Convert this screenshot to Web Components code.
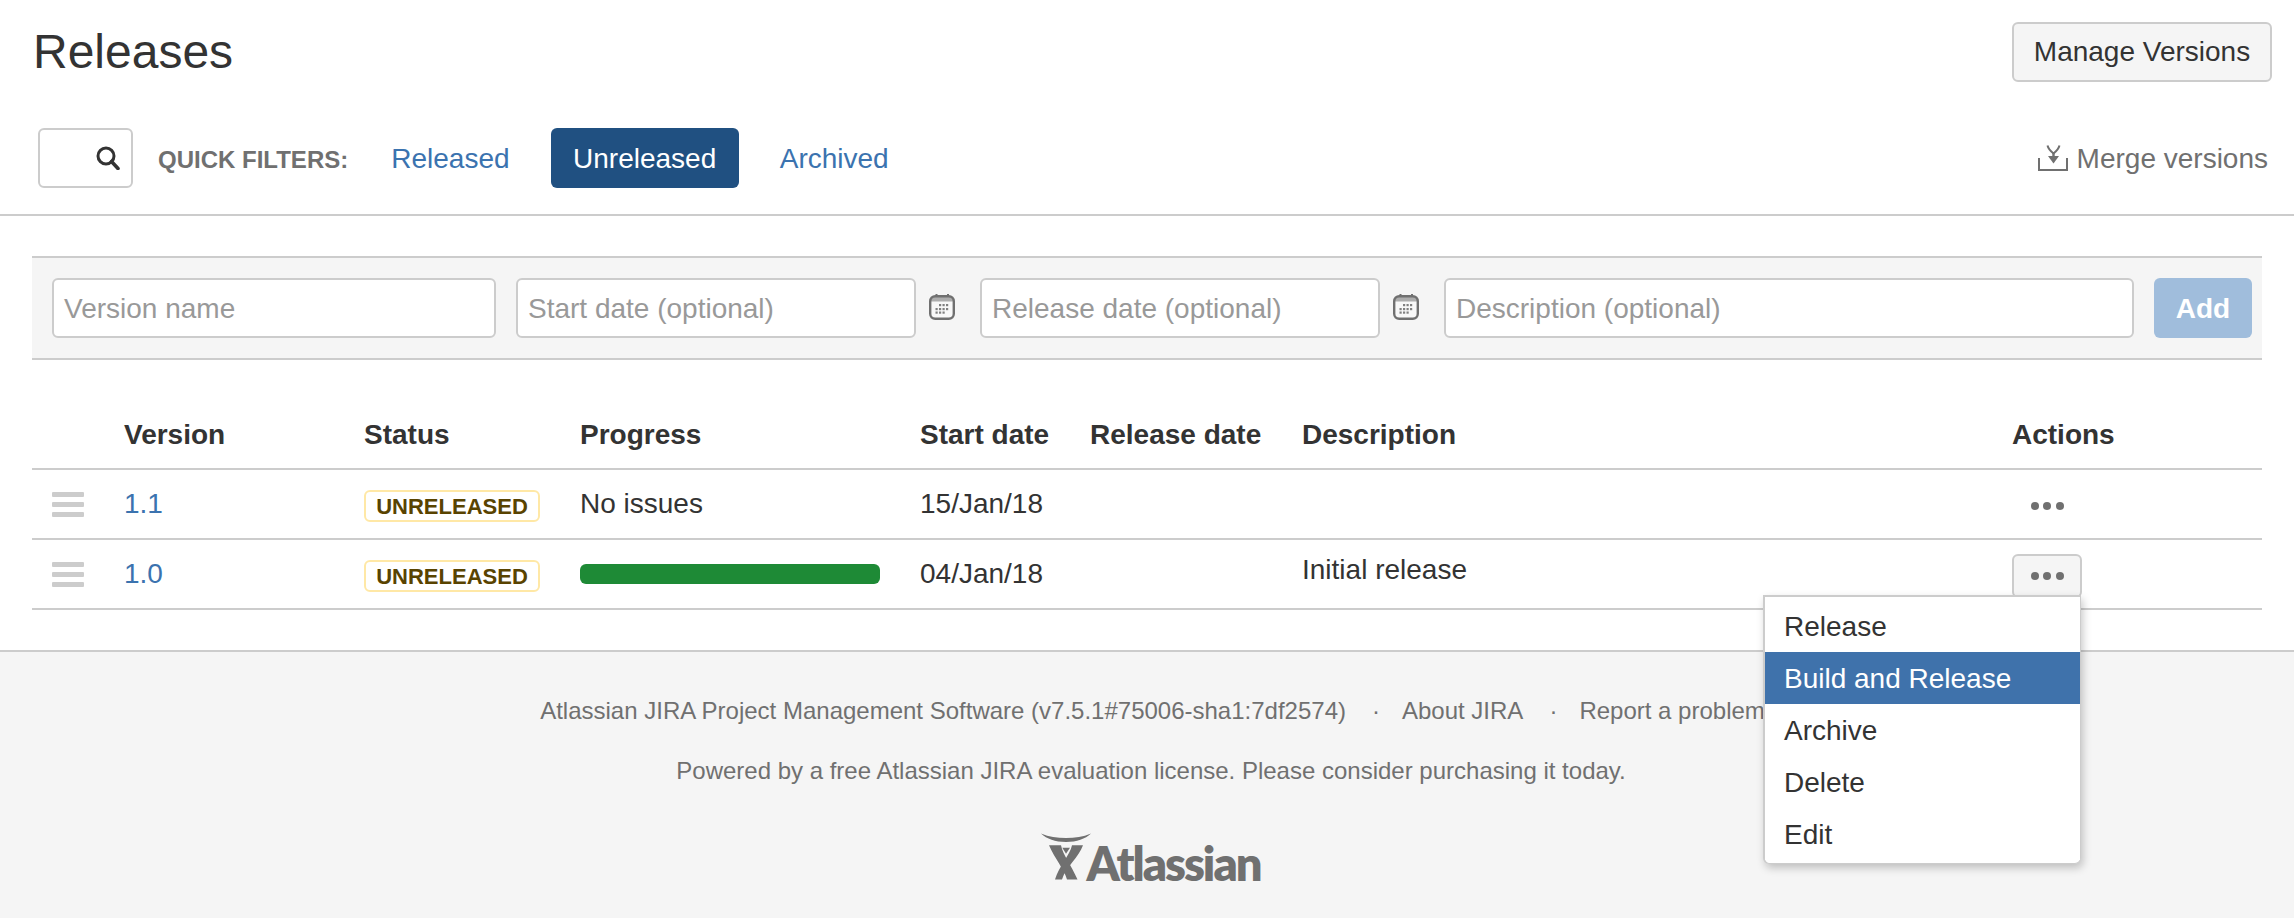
<!DOCTYPE html>
<html lang="en">
<head>
<meta charset="utf-8">
<title>Releases</title>
<style>
html,body{margin:0;padding:0;height:100%;background:#fff}
body{font:28px/40px "Liberation Sans",Arial,sans-serif;color:#333;overflow:hidden}
</style>
</head>
<body>
<release-page>
  <page-header>
    <span slot="title">Releases</span>
    <plain-button slot="action">Manage Versions</plain-button>
  </page-header>
  <filter-bar>
    <search-box slot="start"></search-box>
    <filter-label slot="start">QUICK FILTERS:</filter-label>
    <filter-pill slot="start">Released</filter-pill>
    <filter-pill slot="start" active>Unreleased</filter-pill>
    <filter-pill slot="start">Archived</filter-pill>
    <merge-link slot="end">Merge versions</merge-link>
  </filter-bar>
  <version-form>
    <form-field style="width:444px">Version name</form-field>
    <form-field style="width:400px" date>Start date (optional)</form-field>
    <form-field style="width:400px" date>Release date (optional)</form-field>
    <form-field style="width:690px">Description (optional)</form-field>
    <add-button>Add</add-button>
  </version-form>
  <version-table>
    <version-head>
      <span></span><span>Version</span><span>Status</span><span>Progress</span><span>Start date</span><span>Release date</span><span>Description</span><span>Actions</span>
    </version-head>
    <version-row>
      <drag-handle></drag-handle>
      <version-link>1.1</version-link>
      <status-lozenge>UNRELEASED</status-lozenge>
      <row-text>No issues</row-text>
      <row-text>15/Jan/18</row-text>
      <span></span>
      <span></span>
      <row-actions></row-actions>
    </version-row>
    <version-row>
      <drag-handle></drag-handle>
      <version-link>1.0</version-link>
      <status-lozenge>UNRELEASED</status-lozenge>
      <progress-bar></progress-bar>
      <row-text>04/Jan/18</row-text>
      <span></span>
      <row-text top>Initial release</row-text>
      <row-actions open>
        <action-menu>
          <menu-entry>Release</menu-entry>
          <menu-entry active>Build and Release</menu-entry>
          <menu-entry>Archive</menu-entry>
          <menu-entry>Delete</menu-entry>
          <menu-entry>Edit</menu-entry>
        </action-menu>
      </row-actions>
    </version-row>
  </version-table>
  <page-footer>
    <footer-links>
      <span>Atlassian JIRA Project Management Software (v7.5.1#75006-sha1:7df2574)</span>
      <i>·</i>
      <span>About JIRA</span>
      <i>·</i>
      <span>Report a problem</span>
    </footer-links>
    <footer-note>Powered by a free Atlassian JIRA evaluation license. Please consider purchasing it today.</footer-note>
    <atlassian-logo></atlassian-logo>
  </page-footer>
</release-page>
<script>
function el(name, html){
  customElements.define(name, class extends HTMLElement{
    constructor(){
      super();
      const r=this.attachShadow({mode:'open'});
      r.innerHTML=html;
    }
  });
}
const GRID='display:grid;grid-template-columns:92px 240px 216px 340px 170px 212px 710px 250px;';
const dots=[[10,10],[13.5,10],[17,10],[6.5,14],[10,14],[13.5,14],[17,14],[6.5,17.5],[10,17.5],[13.5,17.5]].map(([x,y])=>`<rect x="${x}" y="${y}" width="2.2" height="2.2"/>`).join('');
const CAL=`<svg style="display:block" width="26" height="26" viewBox="0 0 26 26" aria-hidden="true"><path d="M6.500 0h2v4h-2zM18 0h2v4h-2z" fill="#707070"/><rect x="1.200" y="2.200" width="23.600" height="22.600" rx="5" fill="#f8f8f8" stroke="#707070" stroke-width="2.400"/><path d="M2 6a3 3 0 0 1 3-3h16a3 3 0 0 1 3 3v1.500H2z" fill="#707070" opacity=".55"/><g fill="#808080">${dots}</g></svg>`;

el('release-page','<style>:host{display:flex;flex-direction:column;height:918px}</style><slot></slot>');
el('page-header',`<style>:host{display:flex;justify-content:space-between;align-items:center;padding:22px 22px 0 33px;height:60px}
::slotted([slot=title]){font-size:48px;line-height:60px;color:#333}</style><slot name="title"></slot><slot name="action"></slot>`);
el('plain-button',`<style>:host{display:block;box-sizing:border-box;width:260px;height:60px;background:#f5f5f5;border:2px solid #ccc;border-radius:6px;text-align:center;line-height:56px;color:#333}</style><slot></slot>`);
el('filter-bar',`<style>:host{display:flex;justify-content:space-between;align-items:center;height:60px;margin-top:46px;padding:0 26px 26px 38px;border-bottom:2px solid #ccc}
.s{display:flex;align-items:center;gap:18px}</style><div class="s"><slot name="start"></slot></div><slot name="end"></slot>`);
el('search-box',`<style>:host{display:flex;box-sizing:border-box;width:95px;height:60px;border:2px solid #ccc;border-radius:6px;margin-right:7px;justify-content:flex-end;align-items:center;padding-right:11px;background:#fff}</style>
<svg width="24" height="24" viewBox="0 0 24 24" aria-hidden="true"><circle cx="10" cy="10" r="8" fill="none" stroke="#333" stroke-width="3"/><path d="M15.500 15.500 22 22.500" stroke="#333" stroke-width="3.600" stroke-linecap="round"/></svg>`);
el('filter-label',`<style>:host{display:block;font-weight:bold;font-size:24px;line-height:63px;height:60px;color:#707070;margin-right:2px}</style><slot></slot>`);
el('filter-pill',`<style>:host{display:block;padding:0 23px;height:60px;line-height:62px;color:#3b73af;border-radius:6px}
:host([active]){background:#205081;color:#fff;padding:0 22.500px}</style><slot></slot>`);
el('merge-link',`<style>:host{display:flex;align-items:center;gap:9px;color:#707070;line-height:63px;height:60px}
svg{display:block;margin-top:1px}</style><svg width="30" height="27" viewBox="0 0 30 27" aria-hidden="true"><path d="M1 13v12h28V13" fill="none" stroke="#707070" stroke-width="2"/><path d="M9.500 .5c1 4 3.500 6 6 8c2.500-2 5-4 6-8" fill="none" stroke="#707070" stroke-width="2"/><path d="M14.300 7h2.400v6h-2.400z" fill="#707070"/><path d="M10 11h11l-5.500 7.500z" fill="#707070"/></svg><slot></slot>`);
el('version-form',`<style>:host{display:flex;align-items:center;gap:20px;margin:40px 32px 0;height:60px;padding:20px 10px 20px 20px;background:#f5f5f5;border-top:2px solid #ccc;border-bottom:2px solid #ccc}</style><slot></slot>`);
el('form-field',`<style>:host{display:flex;flex:none;position:relative;box-sizing:border-box;height:60px;background:#fff;border:2px solid #ccc;border-radius:6px;padding:0 10px;line-height:58px;color:#999}
.c{display:none}
:host([date]){margin-right:44px}
:host([date]) .c{display:block;position:absolute;left:100%;top:14px;margin-left:15px}</style><slot></slot><span class="c">${CAL}</span>`);
el('add-button',`<style>:host{display:block;flex:none;box-sizing:border-box;width:98px;height:60px;background:#a0bddc;border-radius:6px;color:#fff;font-weight:bold;text-align:center;line-height:61px}</style><slot></slot>`);
el('version-table',`<style>:host{display:block;margin:0 32px;padding-bottom:40px}</style><slot></slot>`);
el('version-head',`<style>:host{${GRID}box-sizing:border-box;height:110px;padding-top:55px;border-bottom:2px solid #ccc;font-weight:bold;line-height:40px;color:#333}</style><slot></slot>`);
el('version-row',`<style>:host{${GRID}box-sizing:border-box;height:70px;border-bottom:2px solid #ccc;color:#333}</style><slot></slot>`);
el('drag-handle',`<style>:host{display:flex;flex-direction:column;gap:5px;width:32px;margin:22px 0 0 20px}
i{display:block;height:5px;background:#ccc;border-radius:1px}</style><i></i><i></i><i></i>`);
el('version-link',`<style>:host{display:block;padding-top:14px;color:#3b73af}</style><slot></slot>`);
el('row-text',`<style>:host{display:block;padding-top:14px}:host([top]){padding-top:10px}</style><slot></slot>`);
el('status-lozenge',`<style>:host{display:block;box-sizing:border-box;justify-self:start;margin-top:20px;width:176px;height:32px;border:2px solid #ffe8a6;border-radius:6px;background:#fff;font-weight:bold;font-size:22px;line-height:29px;color:#594300;text-align:center}</style><slot></slot>`);
el('progress-bar',`<style>:host{display:block;justify-self:start;width:300px;height:20px;margin-top:24px;background:#1e8a36;border-radius:6px}</style>`);
el('row-actions',`<style>:host{display:block;position:relative;box-sizing:border-box;width:70px;height:44px;margin-top:14px;border:2px solid transparent;border-radius:6px}
:host([open]){background:#f5f5f5;border-color:#ccc}
.d{display:flex;justify-content:center;gap:4.500px;margin-top:16px}
.d i{display:block;width:8px;height:8px;border-radius:50%;background:#707070}</style><div class="d"><i></i><i></i><i></i></div><slot></slot>`);
el('action-menu',`<style>:host{display:block;position:absolute;right:-1px;top:39px;box-sizing:border-box;width:318px;height:269px;background:#fff;border:2px solid #ccc;border-width:2px 1px 1px 2px;border-radius:0 0 6px 6px;padding:3px 0;box-shadow:2px 4px 8px rgba(0,0,0,.22);z-index:5}</style><slot></slot>`);
el('menu-entry',`<style>:host{display:block;height:52px;line-height:53px;padding:0 19px;color:#333;background:#fff}
:host([active]){background:#3f72ab;color:#fff}</style><slot></slot>`);
el('page-footer',`<style>:host{display:flex;flex-direction:column;flex:1;align-items:center;background:#f5f5f5;border-top:2px solid #ccc;font-size:24px;color:#707070;padding-top:39px}</style><slot></slot>`);
el('footer-links',`<style>:host{display:flex;justify-content:center;line-height:40px;margin-left:11px}
::slotted(i){font-style:normal;margin:0 22px 0 26px}</style><slot></slot>`);
el('footer-note',`<style>:host{display:block;margin:20px 0 0 8px;line-height:40px}</style><slot></slot>`);
el('atlassian-logo',`<style>:host{display:flex;align-items:flex-end;margin:42px 0 0 8px;height:48px;color:#707070}
span{font:800 47px/48px Lato,"Open Sans",sans-serif;letter-spacing:-2px;margin-left:-5px;height:48px;position:relative;top:6px;color:#707070}</style>
<svg width="50" height="48" viewBox="0 0 50 48" aria-hidden="true"><path d="M0 .5C8 4 16 5 25 5S42 4 50 .5C44 6 36 9 25 9S6 6 0 .5z" fill="#707070"/><path d="M42 12.300H31C29 22 18 33 14 46.500H21C25 34 38 24 42 12.300z" fill="#707070"/><path d="M8 12.300H20C22 22 30 32 36.500 46.500H26C23 36 14 26 8 12.300z" fill="#707070"/><path d="M21.300 14.700H29L25 20.700z" fill="#707070"/></svg><span>Atlassian</span>`);
</script>
</body>
</html>
